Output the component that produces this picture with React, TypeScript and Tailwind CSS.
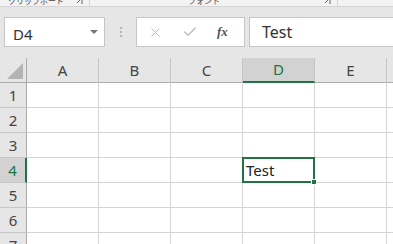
import { Fragment } from "react";
import { Check, X } from "lucide-react";

const cols = ["A", "B", "C", "D", "E", "F"];
const rows = [1, 2, 3, 4, 5, 6, 7];
const font = { fontFamily: '"Noto Sans", "Noto Sans CJK JP", sans-serif' };

function LauncherIcon() {
    return (
        <svg width="8" height="8" viewBox="0 0 8 8" className="text-[#666]">
            <path d="M1 1h6v6" fill="none" stroke="currentColor" strokeWidth="1" />
            <path d="M2 6l4-4" stroke="currentColor" strokeWidth="1" />
        </svg>
    );
}

export default function App() {
    return (
        <div className="w-[393px] h-[244px] overflow-hidden bg-[#e6e6e6] flex flex-col select-none" style={font}>
            {/* Ribbon group labels, cut off */}
            <div className="h-[7px] flex-shrink-0 bg-[#f3f3f3] border-b border-[#d4d4d4] overflow-hidden flex items-end text-[8px] text-[#444] leading-none whitespace-nowrap">
                <div className="w-[90px] h-full flex-shrink-0 flex items-end border-r border-[#d4d4d4]">
                    <span className="ml-[8px] mb-[1px]">クリップボード</span>
                    <span className="ml-auto mr-[6px] mb-[1px]"><LauncherIcon /></span>
                </div>
                <div className="w-[248px] h-full flex-shrink-0 flex items-end border-r border-[#d4d4d4]">
                    <span className="ml-[98px] mb-[1px]">フォント</span>
                    <span className="ml-auto mr-[6px] mb-[1px]"><LauncherIcon /></span>
                </div>
            </div>

            {/* Formula bar */}
            <div className="h-[51px] flex-shrink-0 flex items-center pl-[4px] pb-[1px]">
                <div className="w-[101px] h-[30px] bg-white border border-[#c6c6c6] flex items-center justify-between pl-[8px] pr-[6px]">
                    <span className="text-[15px] text-[#333] mt-[4px]">D4</span>
                    <span className="w-0 h-0 border-l-[4px] border-r-[4px] border-t-[4px] border-l-transparent border-r-transparent border-t-[#777]" />
                </div>
                <div className="w-[31px] flex flex-col items-center gap-[2px]">
                    <span className="w-[2px] h-[2px] bg-[#b4b4b4]" />
                    <span className="w-[2px] h-[2px] bg-[#b4b4b4]" />
                    <span className="w-[2px] h-[2px] bg-[#b4b4b4]" />
                </div>
                <div className="w-[109px] h-[30px] bg-white border border-[#c6c6c6] flex items-center">
                    <X size={15} strokeWidth={1.5} className="text-[#bcbcbc] ml-[11px]" />
                    <Check size={16} strokeWidth={2} className="text-[#bcbcbc] ml-[19px]" />
                    <span className="ml-[19px] text-[13px] italic font-semibold text-[#555]" style={{ fontFamily: '"Liberation Serif", serif' }}>fx</span>
                </div>
                <div className="ml-[4px] flex-1 h-[30px] bg-white border border-[#c6c6c6] border-r-0 flex items-center pl-[12px]">
                    <span className="text-[16px] text-[#333]">Test</span>
                </div>
            </div>

            {/* Sheet grid */}
            <div className="flex-1 overflow-hidden">
                <div className="grid grid-cols-[27px_repeat(6,72px)] auto-rows-[25px] w-max bg-white">
                    <div className="bg-[#e6e6e6] border-r border-b border-[#ababab] relative">
                        <span className="absolute right-[3px] bottom-[3px] w-0 h-0" style={{ borderBottom: "16px solid #b4b4b4", borderLeft: "16px solid transparent" }} />
                    </div>
                    {cols.map(c => (
                        <div
                            key={c}
                            className={c === "D"
                                ? "bg-[#d2d2d2] border-r border-[#c6c6c6] border-b-2 border-b-[#217346] flex items-center justify-center text-[15px] text-[#217346]"
                                : "bg-[#e6e6e6] border-r border-b border-[#c6c6c6] border-b-[#ababab] flex items-center justify-center text-[15px] text-[#444]"}
                        >
                            {c}
                        </div>
                    ))}
                    {rows.map(r => (
                        <Fragment key={r}>
                            <div
                                className={r === 4
                                    ? "bg-[#d2d2d2] border-r-2 border-r-[#217346] border-b border-[#c6c6c6] flex items-center justify-center text-[15px] text-[#217346]"
                                    : "bg-[#e6e6e6] border-r border-r-[#ababab] border-b border-[#c6c6c6] flex items-center justify-center text-[15px] text-[#444]"}
                            >
                                {r}
                            </div>
                            {cols.map(c => (
                                <div key={c} className="border-r border-b border-[#d4d4d4] relative">
                                    {c === "D" && r === 4 && (
                                        <div className="absolute -left-[1px] -top-[1px] w-[73px] h-[26px] border-2 border-[#217346] z-10 flex items-center pl-[2px]">
                                            <span className="text-[15px] text-[#222]">Test</span>
                                            <span className="absolute -right-[4px] -bottom-[4px] w-[6px] h-[6px] bg-[#217346] border border-white" />
                                        </div>
                                    )}
                                </div>
                            ))}
                        </Fragment>
                    ))}
                </div>
            </div>
        </div>
    );
}
